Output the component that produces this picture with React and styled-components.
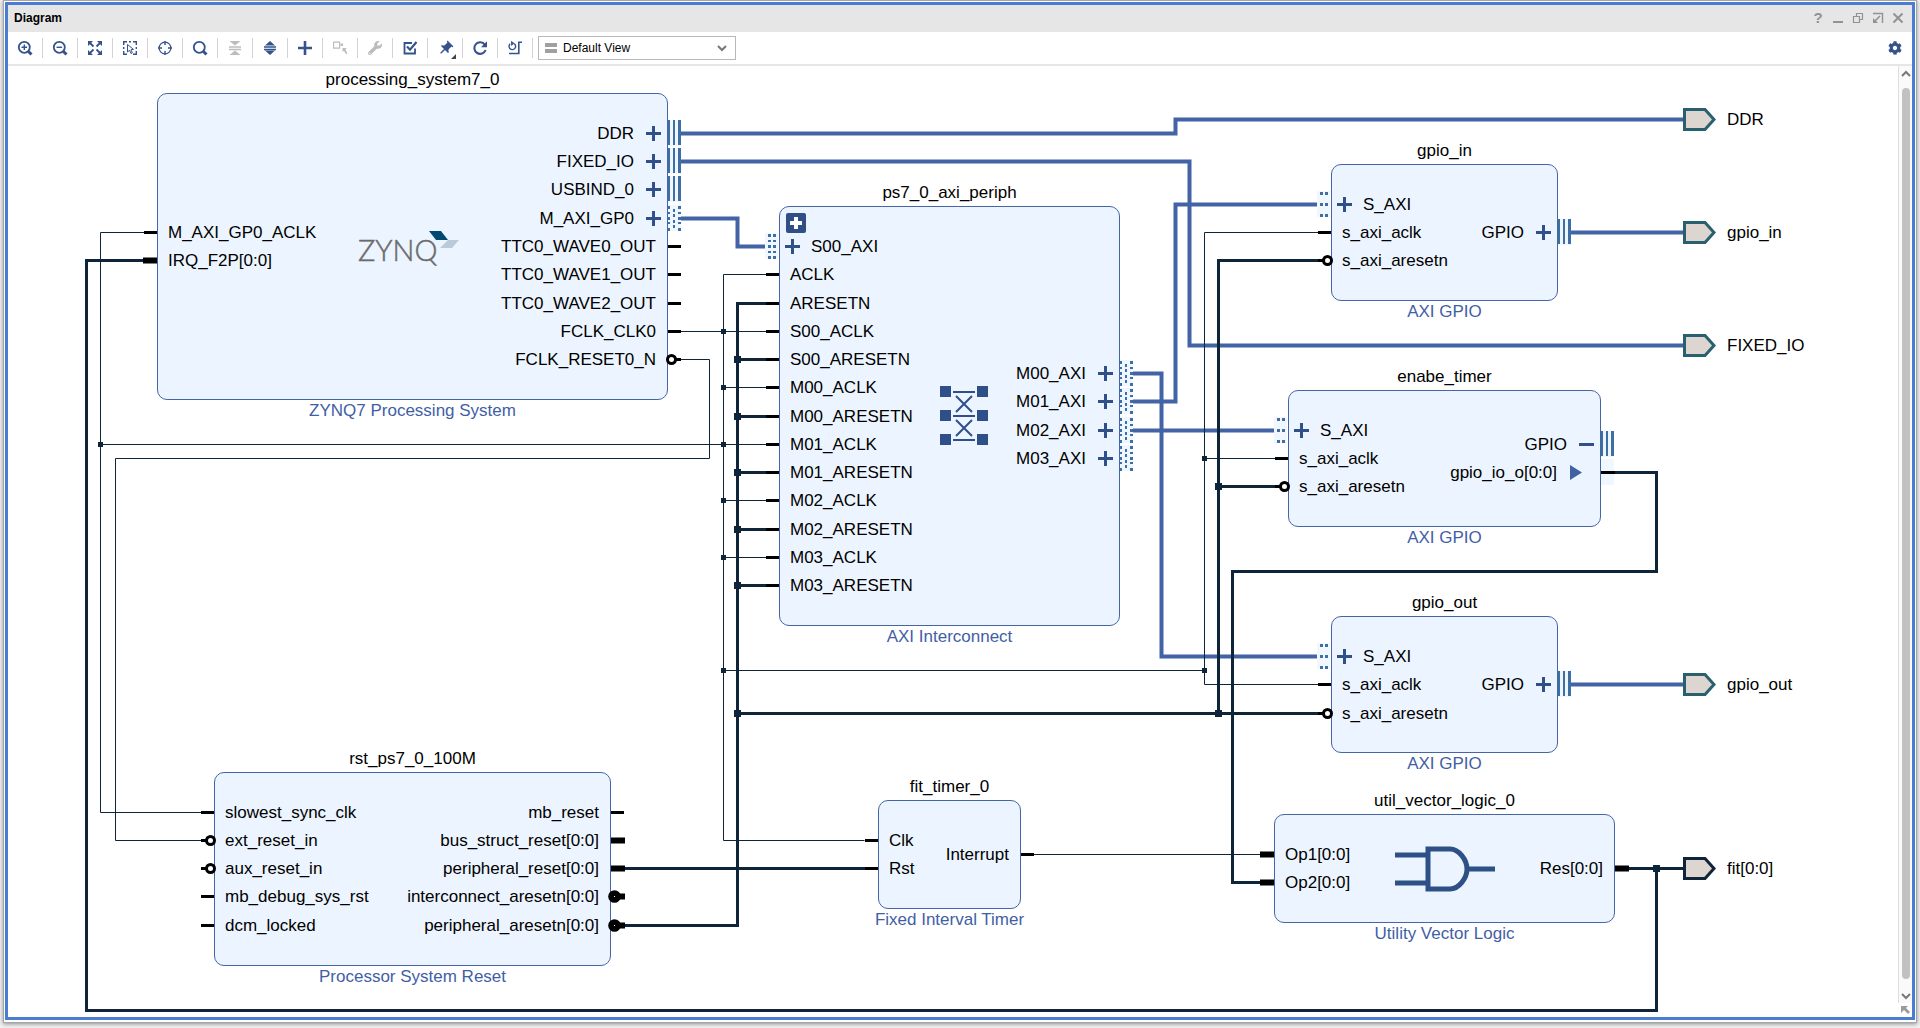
import React from "react";
import styled, { createGlobalStyle, css } from "styled-components";
import { FaWrench, FaCog } from "react-icons/fa";
import { MdPushPin } from "react-icons/md";

//*********************************************************
// Grid
//*********************************************************
const GRID_TOP = 67.29;
const GRID_PITCH = 28.285;
const HALF_ROW = 14;
const BLOCK_PAD = 40;
const TITLE_SPACE = 23;

// Every pin sits on a row (or half row) of the sheet
const rowY = row => Math.floor(GRID_TOP + GRID_PITCH * row);

//*********************************************************
// Data
//*********************************************************
const blocks = [
	{
		name: "processing_system7_0",
		type: "ZYNQ7 Processing System",
		x: 149,
		width: 511,
		top: 0,
		bottom: 8,
		icon: "zynq",
		left: { first: 3.5, ports: [
			{ label: "M_AXI_GP0_ACLK", pin: "stub" },
			{ label: "IRQ_F2P[0:0]", pin: "wide" }
		] },
		right: { first: 0, ports: [
			{ label: "DDR", pin: "bus", sign: "plus" },
			{ label: "FIXED_IO", pin: "bus", sign: "plus" },
			{ label: "USBIND_0", pin: "bus", sign: "plus" },
			{ label: "M_AXI_GP0", pin: "master", sign: "plus" },
			{ label: "TTC0_WAVE0_OUT", pin: "stub" },
			{ label: "TTC0_WAVE1_OUT", pin: "stub" },
			{ label: "TTC0_WAVE2_OUT", pin: "stub" },
			{ label: "FCLK_CLK0", pin: "stub" },
			{ label: "FCLK_RESET0_N", pin: "inverted" }
		] }
	},
	{
		name: "ps7_0_axi_periph",
		type: "AXI Interconnect",
		x: 771,
		width: 341,
		top: 4,
		bottom: 16,
		icon: "interconnect",
		expandable: true,
		left: { first: 4, ports: [
			{ label: "S00_AXI", pin: "slave", sign: "plus" },
			{ label: "ACLK", pin: "stub" },
			{ label: "ARESETN", pin: "stub" },
			{ label: "S00_ACLK", pin: "stub" },
			{ label: "S00_ARESETN", pin: "stub" },
			{ label: "M00_ACLK", pin: "stub" },
			{ label: "M00_ARESETN", pin: "stub" },
			{ label: "M01_ACLK", pin: "stub" },
			{ label: "M01_ARESETN", pin: "stub" },
			{ label: "M02_ACLK", pin: "stub" },
			{ label: "M02_ARESETN", pin: "stub" },
			{ label: "M03_ACLK", pin: "stub" },
			{ label: "M03_ARESETN", pin: "stub" }
		] },
		right: { first: 8.5, ports: [
			{ label: "M00_AXI", pin: "master", sign: "plus" },
			{ label: "M01_AXI", pin: "master", sign: "plus" },
			{ label: "M02_AXI", pin: "master", sign: "plus" },
			{ label: "M03_AXI", pin: "master", sign: "plus" }
		] }
	},
	{
		name: "gpio_in",
		type: "AXI GPIO",
		x: 1323,
		width: 227,
		top: 2.5,
		bottom: 4.5,
		left: { first: 2.5, ports: [
			{ label: "S_AXI", pin: "lite", sign: "plus" },
			{ label: "s_axi_aclk", pin: "stub" },
			{ label: "s_axi_aresetn", pin: "inverted" }
		] },
		right: { first: 3.5, ports: [
			{ label: "GPIO", pin: "bus", sign: "plus" }
		] }
	},
	{
		name: "enabe_timer",
		type: "AXI GPIO",
		x: 1280,
		width: 313,
		top: 10.5,
		bottom: 12.5,
		left: { first: 10.5, ports: [
			{ label: "S_AXI", pin: "lite", sign: "plus" },
			{ label: "s_axi_aclk", pin: "stub" },
			{ label: "s_axi_aresetn", pin: "inverted" }
		] },
		right: { first: 11, ports: [
			{ label: "GPIO", pin: "bus", sign: "minus" },
			{ label: "gpio_io_o[0:0]", pin: "member", sign: "arrow" }
		] }
	},
	{
		name: "gpio_out",
		type: "AXI GPIO",
		x: 1323,
		width: 227,
		top: 18.5,
		bottom: 20.5,
		left: { first: 18.5, ports: [
			{ label: "S_AXI", pin: "lite", sign: "plus" },
			{ label: "s_axi_aclk", pin: "stub" },
			{ label: "s_axi_aresetn", pin: "inverted" }
		] },
		right: { first: 19.5, ports: [
			{ label: "GPIO", pin: "bus", sign: "plus" }
		] }
	},
	{
		name: "rst_ps7_0_100M",
		type: "Processor System Reset",
		x: 206,
		width: 397,
		top: 24,
		bottom: 28,
		left: { first: 24, ports: [
			{ label: "slowest_sync_clk", pin: "stub" },
			{ label: "ext_reset_in", pin: "inverted" },
			{ label: "aux_reset_in", pin: "inverted" },
			{ label: "mb_debug_sys_rst", pin: "stub" },
			{ label: "dcm_locked", pin: "stub" }
		] },
		right: { first: 24, ports: [
			{ label: "mb_reset", pin: "stub" },
			{ label: "bus_struct_reset[0:0]", pin: "wide" },
			{ label: "peripheral_reset[0:0]", pin: "wide" },
			{ label: "interconnect_aresetn[0:0]", pin: "wideInverted" },
			{ label: "peripheral_aresetn[0:0]", pin: "wideInverted" }
		] }
	},
	{
		name: "fit_timer_0",
		type: "Fixed Interval Timer",
		x: 870,
		width: 143,
		top: 25,
		bottom: 26,
		left: { first: 25, ports: [
			{ label: "Clk", pin: "stub" },
			{ label: "Rst", pin: "stub" }
		] },
		right: { first: 25.5, ports: [
			{ label: "Interrupt", pin: "stub" }
		] }
	},
	{
		name: "util_vector_logic_0",
		type: "Utility Vector Logic",
		x: 1266,
		width: 341,
		top: 25.5,
		bottom: 26.5,
		icon: "gate",
		left: { first: 25.5, ports: [
			{ label: "Op1[0:0]", pin: "wide" },
			{ label: "Op2[0:0]", pin: "wide" }
		] },
		right: { first: 26, ports: [
			{ label: "Res[0:0]", pin: "wide" }
		] }
	}
];

const externals = [
	{ label: "DDR", row: -0.5, color: "#28606f" },
	{ label: "gpio_in", row: 3.5, color: "#28606f" },
	{ label: "FIXED_IO", row: 7.5, color: "#28606f" },
	{ label: "gpio_out", row: 19.5, color: "#28606f" },
	{ label: "fit[0:0]", row: 26, color: "#0e2439" }
];

// Each wire is a list of [x, row] corners
const busWires = [
	[[672, 0], [1167, 0], [1167, -0.5], [1676, -0.5]],
	[[672, 1], [1181, 1], [1181, 7.5], [1676, 7.5]],
	[[672, 3], [729, 3], [729, 4], [758, 4]],
	[[1124, 8.5], [1153, 8.5], [1153, 18.5], [1309, 18.5]],
	[[1124, 9.5], [1167, 9.5], [1167, 2.5], [1309, 2.5]],
	[[1124, 10.5], [1266, 10.5]],
	[[1562, 3.5], [1676, 3.5]],
	[[1562, 19.5], [1676, 19.5]]
];

const thinWires = [
	[[672, 7], [758, 7]],
	[[758, 5], [715, 5], [715, 25], [856, 25]],
	[[715, 9], [758, 9]],
	[[92, 11], [758, 11]],
	[[715, 13], [758, 13]],
	[[715, 15], [758, 15]],
	[[136, 3.5], [92, 3.5], [92, 24], [193, 24]],
	[[715, 19], [1196, 19]],
	[[1310, 3.5], [1196, 3.5], [1196, 19.5], [1310, 19.5]],
	[[1196, 11.5], [1267, 11.5]],
	[[672, 8], [701, 8], [701, 11.5], [107, 11.5], [107, 25], [193, 25]],
	[[1025, 25.5], [1253, 25.5]]
];

const thickWires = [
	[[758, 6], [729, 6], [729, 28], [616, 28]],
	[[729, 8], [758, 8]],
	[[729, 10], [758, 10]],
	[[729, 12], [758, 12]],
	[[729, 14], [758, 14]],
	[[729, 16], [758, 16]],
	[[729, 20.5], [1310, 20.5]],
	[[1310, 4.5], [1210, 4.5], [1210, 20.5]],
	[[1210, 12.5], [1267, 12.5]],
	[[1606, 12], [1648, 12], [1648, 15.5], [1224, 15.5], [1224, 26.5], [1253, 26.5]],
	[[1619, 26], [1676, 26]],
	[[1648, 26], [1648, 31], [78, 31], [78, 4.5], [136, 4.5]],
	[[616, 26], [857, 26]]
];

const thinJoints = [
	[715, 7], [715, 9], [715, 11], [715, 13], [715, 15], [715, 19],
	[92, 11], [1196, 11.5], [1196, 19]
];

const thickJoints = [
	[729, 8], [729, 10], [729, 12], [729, 14], [729, 16], [729, 20.5],
	[1210, 12.5], [1210, 20.5], [1648, 26]
];

//*********************************************************
// Styles
//*********************************************************
const GlobalStyle = createGlobalStyle`
	* {
		box-sizing: border-box;
	}

	body {
		margin: 0;
		background: #f1f1f1;
		color: #000;
		font-family: "Liberation Sans", Arial, sans-serif;
		font-size: 12px;
	}
`;

const Page = styled.div`
	display: flex;
	height: 100vh;
	padding: 0 3px 5px;
	overflow: hidden;
`;

const Frame = styled.div`
	display: flex;
	flex: 1;
	min-width: 0;
	padding: 1px 1px 2px;
	border: 1px solid #a6a6a6;
	background: #fff;
	box-shadow: 0 1px 4px #8c8c8c;
`;

const Window = styled.main`
	display: flex;
	flex: 1;
	min-width: 0;
	flex-direction: column;
	border: 3px solid #4a7dd2;
	background: #fff;
`;

const TitleBar = styled.header`
	display: flex;
	align-items: center;
	justify-content: space-between;
	height: 27px;
	padding: 0 4px 2px 6px;
	background: #e6e6e6;
`;

const Title = styled.h1`
	margin: 0;
	font-size: 12px;
	line-height: 16px;
`;

const TitleButtons = styled.div`
	display: flex;
`;

const TitleButton = styled.button`
	display: flex;
	align-items: center;
	justify-content: center;
	width: 20px;
	height: 20px;
	padding: 0;
	border: 0;
	background: none;
	color: #929292;
	font: bold 15px "Liberation Sans", Arial, sans-serif;
`;

const Toolbar = styled.div`
	display: flex;
	align-items: center;
	height: 34px;
	border-bottom: 2px solid #e6e6e6;
`;

const ToolButton = styled.button`
	position: relative;
	display: flex;
	align-items: center;
	justify-content: center;
	width: 35px;
	height: 20px;
	padding: 0;
	border: 0;
	border-right: 1px solid #d3d3d3;
	background: none;
	color: #34528c;

	&:disabled {
		color: #bcbcbc;
	}
`;

const MenuMark = styled.span`
	position: absolute;
	right: 6px;
	bottom: -1px;
	border-bottom: 5px solid #444;
	border-left: 5px solid transparent;
`;

const ViewPicker = styled.label`
	display: flex;
	align-items: center;
	gap: 6px;
	width: 198px;
	height: 24px;
	margin-left: 5px;
	padding: 0 8px 0 6px;
	border: 1px solid #b9b9b9;
	background: #fff;
`;

const ViewSelect = styled.select`
	flex: 1;
	appearance: none;
	padding: 0;
	border: 0;
	background: none;
	color: #000;
	font: 12px "Liberation Sans", Arial, sans-serif;
`;

const SettingsButton = styled(ToolButton)`
	margin-left: auto;
	border-right: 0;
`;

const Body = styled.div`
	display: flex;
	flex: 1;
	min-height: 0;
`;

const Viewport = styled.div`
	flex: 1;
	min-width: 0;
	overflow: hidden;
`;

const ScrollColumn = styled.div`
	display: flex;
	flex-direction: column;
	width: 14px;
`;

const ScrollBar = styled.div`
	display: flex;
	flex: 1;
	flex-direction: column;
	align-items: center;
	border-left: 1px solid #dedede;
	background: #fafafa;
	color: #777;
`;

const ScrollArrow = styled.button`
	display: flex;
	align-items: center;
	justify-content: center;
	width: 13px;
	height: 14px;
	padding: 0;
	border: 0;
	background: none;
	color: inherit;
`;

const ScrollThumb = styled.div`
	flex: 1;
	width: 8px;
	margin: 8px 0 10px;
	border-radius: 4px;
	background: #c1c1c1;
`;

const Corner = styled.div`
	display: flex;
	justify-content: center;
	height: 14px;
`;

const Sheet = styled.div`
	position: relative;
	width: 1890px;
	font-size: 17px;
	line-height: 20px;
	white-space: nowrap;
`;

const WireLayer = styled.svg`
	display: block;
`;

const Node = styled.section`
	position: absolute;
	display: flex;
	flex-direction: column;
	align-items: center;
`;

const NodeName = styled.h2`
	height: 23px;
	margin: 0;
	font-size: inherit;
	font-weight: normal;
	line-height: 20px;
`;

const NodeType = styled.p`
	margin: 1px 0 0;
	color: #3f60a6;
`;

const NodeBox = styled.div`
	position: relative;
	display: flex;
	align-self: stretch;
	justify-content: space-between;
	border: 1px solid #4565a6;
	border-radius: 10px;
	background: #ecf5ff;
`;

const Ports = styled.ul`
	display: flex;
	flex-direction: column;
	margin: 0;
	padding: 0;
	list-style: none;
`;

const PortRow = styled.li`
	display: flex;
	align-items: flex-start;
	flex-direction: ${props => (props.$side === "right" ? "row-reverse" : "row")};
`;

const PinSlot = styled.svg`
	display: block;
	flex: none;
	overflow: visible;
	${props => (props.$side === "right"
		? css`margin-right: -15px;`
		: css`margin-left: -15px;`)}
`;

const Sign = styled.svg`
	display: block;
	flex: none;
	margin-left: ${props => (props.$side === "left" ? "6px" : "0")};
	margin-right: ${props => {
		if (props.$side === "left") return "0";
		return props.$kind === "arrow" ? "17px" : "7px";
	}};
`;

const PortLabel = styled.span`
	padding: ${props => (props.$side === "right" ? "0 12px 0 0" : "0 0 0 11px")};
	line-height: 29px;
`;

const Emblem = styled.div`
	display: grid;
	flex: none;
	align-self: center;
`;

const ExpandButton = styled.button`
	position: absolute;
	top: 6px;
	left: 6px;
	display: flex;
	align-items: center;
	justify-content: center;
	width: 20px;
	height: 20px;
	padding: 0;
	border: 0;
	border-radius: 2px;
	background: #304f87;
`;

const External = styled.div`
	position: absolute;
	left: 1675px;
	display: flex;
	align-items: center;
	gap: 11px;
	height: 29px;
`;

//*********************************************************
// Icons
//*********************************************************
const Icon = ({ children, size = 16 }) => (
	<svg
		width={size}
		height={size}
		viewBox={`0 0 ${size} ${size}`}
		fill="none"
		stroke="currentColor"
		strokeWidth="2"
		aria-hidden="true"
	>
		{children}
	</svg>
);

const Lens = ({ children }) => (
	<Icon>
		<circle cx="7.3" cy="7.3" r="5.5" strokeWidth="1.8"/>
		<path d="M11.2 11.2l3.3 3.3" strokeWidth="3"/>
		{children}
	</Icon>
);

const FitIcon = () => (
	<Icon>
		<path d="M6.5 6.5L3 3M9.5 6.5L13 3M6.5 9.5L3 13M9.5 9.5L13 13" strokeWidth="1.8"/>
		<path
			d="M1 1h5L1 6zM15 1v5l-5-5zM1 15v-5l5 5zM15 15h-5l5-5z"
			fill="currentColor"
			stroke="none"
		/>
	</Icon>
);

const SelectAreaIcon = () => (
	<Icon>
		<path d="M1.7 5V1.7H5M11 1.7h3.3V5M14.3 11v3.3H11M5 14.3H1.7V11M7 1.7h2M1.7 7v2M14.3 7v2" strokeWidth="1.4"/>
		<path d="M5.5 4.5v7.5l2-1.7 1.5 3.2 1.4-.7-1.5-3 2.6-.4z" strokeWidth="1"/>
	</Icon>
);

const TargetIcon = () => (
	<Icon>
		<circle cx="8" cy="8" r="5.9" strokeWidth="1.2"/>
		<path d="M8 1v4M8 11v4M1 8h4M11 8h4" strokeWidth="1.4"/>
	</Icon>
);

const CollapseIcon = () => (
	<Icon>
		<path d="M2.5 1h11L8 5.5zM2.5 15h11L8 10.5z" fill="currentColor" stroke="none"/>
		<path d="M2 7h12M2 9.5h12" strokeWidth="1.4"/>
	</Icon>
);

const ExpandIcon = () => (
	<Icon>
		<path d="M8 1l5 4.5H3zM8 15l5-4.5H3z" fill="currentColor" stroke="none"/>
		<path d="M2 7h12M2 9.5h12" strokeWidth="1.6"/>
	</Icon>
);

const AddIcon = () => (
	<Icon>
		<path d="M8 1v14M1 8h14" strokeWidth="2.6"/>
	</Icon>
);

const ConnectIcon = () => (
	<Icon>
		<path d="M1.6 2.1h6v6h-6z" strokeWidth="1.1"/>
		<path d="M8.5 3.5h2.5v2.5H8.5z" fill="currentColor" stroke="none"/>
		<path d="M10.5 8h4.2l-1.3 1.5 2 3.8-1.3 1-2.2-3.6-1.4 1.4z" fill="currentColor" stroke="none"/>
	</Icon>
);

const ValidateIcon = () => (
	<Icon>
		<path d="M13 8.5v5H2.5V3H10" strokeWidth="1.8"/>
		<path d="M5 6.5l3 3.2L14.5 2" strokeWidth="2.2"/>
	</Icon>
);

const RefreshIcon = () => (
	<Icon>
		<path d="M12.8 4.6A5.8 5.8 0 1 0 13.6 10" strokeWidth="2.1"/>
		<path d="M15 1.2v6H9z" fill="currentColor" stroke="none"/>
	</Icon>
);

const RouteIcon = () => (
	<Icon>
		<path d="M3.2 3.8A3.3 3.3 0 1 0 7.2 3.6" strokeWidth="1.4"/>
		<path d="M4 .8l3.4 2.4L4.2 6z" fill="currentColor" stroke="none"/>
		<path d="M15 2.2h-3.2v11.3H2" strokeWidth="1.6"/>
	</Icon>
);

const ZynqLogo = () => (
	<svg width="102" height="36" viewBox="0 0 102 36" overflow="visible" role="img" aria-label="ZYNQ">
		<text
			x="0"
			y="32"
			fill="#6b6c6e"
			stroke="#6b6c6e"
			strokeWidth="0.5"
			fontFamily="Lato, sans-serif"
			fontWeight="300"
			fontSize="29"
		>
			ZYNQ
		</text>
		<path d="M71 2h12l7 9H78z" fill="#004a70"/>
		<path d="M90 11h11l-7 8H82z" fill="#b9cad8"/>
	</svg>
);

const InterconnectLogo = () => (
	<svg width="48" height="60" viewBox="0 0 48 60" fill="#2e4f87" stroke="#2e4f87" aria-hidden="true">
		<g stroke="none">
			<path d="M0 0h11v11H0zM37 0h11v11H37zM0 24h11v11H0zM37 24h11v11H37zM0 48h11v11H0zM37 48h11v11H37z"/>
			<path d="M13 5h22v2H13zM13 29h22v2H13zM13 53h22v2H13z"/>
		</g>
		<path d="M16 10l16 16M32 10L16 26M16 34l16 16M32 34L16 50" strokeWidth="2"/>
	</svg>
);

const GateLogo = () => (
	<svg width="100" height="46" viewBox="0 0 100 46" fill="none" stroke="#2d5086" strokeWidth="5" aria-hidden="true">
		<path d="M0 9h31M0 37h31M72 23h28"/>
		<path d="M33 3h22c9 0 17 11 17 20s-8 20-17 20H33z"/>
	</svg>
);

const emblems = {
	zynq: ZynqLogo,
	interconnect: InterconnectLogo,
	gate: GateLogo
};

const signs = {
	plus: <path d="M0 13h15v3H0zM6 7h3v15H6z" fill="#30508a"/>,
	minus: <path d="M0 13h15v3H0z" fill="#30508a"/>,
	arrow: <path d="M1 7l12 7.5L1 22z" fill="#4062a4"/>
};

// Pins are drawn as they hang off the right edge of a block
const pinShapes = {
	stub: <rect y="13" width="13" height="3"/>,
	wide: <rect y="11.5" width="14" height="6"/>,
	inverted: (
		<g>
			<circle cx="3.5" cy="14.5" r="4" fill="#fff" stroke="#000" strokeWidth="3"/>
			<rect x="8" y="13" width="5" height="3"/>
		</g>
	),
	wideInverted: (
		<g>
			<rect x="4" y="11.5" width="10" height="6"/>
			<circle cx="3.5" cy="14.5" r="6.3"/>
			<rect x="3" y="14" width="1" height="1" fill="#fff"/>
		</g>
	),
	member: (
		<g>
			<rect y="1" width="13" height="26" fill="#f0f7ff"/>
			<rect y="13" width="14" height="3"/>
		</g>
	),
	bus: (
		<g>
			<rect y="1" width="13" height="26" fill="#eef6ff"/>
			<path d="M0 1h2v25H0zM5 1h2v25H5zM10 1h3v25h-3z" fill="#3f6ea3"/>
		</g>
	),
	master: (
		<g fill="#3f6ea3">
			<rect y="1" width="13" height="26" fill="#eef6ff"/>
			<path d="M0 2h2v3H0zM0 8h2v2H0zM0 13h2v3H0zM0 18h2v2H0zM0 24h2v3H0z"/>
			<path d="M5 5h2v3H5zM5 10h2v3H5zM5 16h2v3H5zM5 21h2v3H5z"/>
			<path d="M10 2h3v3h-3zM10 8h3v2h-3zM10 13h3v3h-3zM10 18h3v2h-3zM10 24h3v3h-3z"/>
		</g>
	),
	slave: (
		<g fill="#3f6ea3">
			<rect x="1" y="1" width="13" height="26" fill="#f0f7ff"/>
			<path d="M3 2h3v3H3zM3 8h3v2H3zM3 13h3v3H3zM3 19h3v2H3zM3 24h3v3H3z"/>
			<path d="M8 2h3v3H8zM8 8h3v2H8zM8 13h3v3H8zM8 19h3v2H8zM8 24h3v3H8z"/>
		</g>
	),
	lite: (
		<g fill="#3f6ea3">
			<rect x="1" y="1" width="13" height="26" fill="#f0f7ff"/>
			<path d="M3 2h3v3H3zM3 13h3v3H3zM3 24h3v3H3z"/>
			<path d="M8 2h3v3H8zM8 13h3v3H8zM8 24h3v3H8z"/>
		</g>
	)
};

//*********************************************************
// Diagram
//*********************************************************
const Port = ({ port, side, row }) => (
	<PortRow $side={side} style={{ height: rowY(row + 1) - rowY(row) }}>
		<PinSlot $side={side} width="14" height="28" aria-hidden="true">
			<g transform={side === "left" ? "translate(14 0) scale(-1 1)" : undefined}>
				{pinShapes[port.pin]}
			</g>
		</PinSlot>
		{port.sign && (
			<Sign $side={side} $kind={port.sign} width="15" height="28" aria-hidden="true">
				{signs[port.sign]}
			</Sign>
		)}
		<PortLabel $side={side}>{port.label}</PortLabel>
	</PortRow>
);

const PortColumn = ({ side, top, column }) => (
	<Ports style={{ paddingTop: rowY(column.first) - rowY(top) + BLOCK_PAD - HALF_ROW - 1 }}>
		{column.ports.map((port, i) => (
			<Port key={port.label} port={port} side={side} row={column.first + i}/>
		))}
	</Ports>
);

const Block = ({ block }) => {
	const Logo = emblems[block.icon];
	const top = rowY(block.top) - BLOCK_PAD;
	const height = Math.floor((block.bottom - block.top) * GRID_PITCH) + 2 * BLOCK_PAD + 1;

	return (
		<Node style={{ left: block.x, top: top - TITLE_SPACE, width: block.width }}>
			<NodeName>{block.name}</NodeName>
			<NodeBox style={{ height }}>
				<PortColumn side="left" top={block.top} column={block.left}/>
				{Logo && <Emblem><Logo/></Emblem>}
				<PortColumn side="right" top={block.top} column={block.right}/>
				{block.expandable && (
					<ExpandButton aria-label="Expand hierarchy">
						<svg width="12" height="12" viewBox="0 0 12 12" fill="#fff">
							<path d="M0 4h12v4H0zM4 0h4v12H4z"/>
						</svg>
					</ExpandButton>
				)}
			</NodeBox>
			<NodeType>{block.type}</NodeType>
		</Node>
	);
};

const toPoints = wire => wire.map(([x, row]) => `${x},${rowY(row)}`).join(" ");

const Wires = ({ wires, color, width }) => (
	<g fill="none" stroke={color} strokeWidth={width}>
		{wires.map(wire => <polyline key={toPoints(wire)} points={toPoints(wire)}/>)}
	</g>
);

const Joints = ({ points, size }) => (
	<g fill="#0e2439">
		{points.map(([x, row]) => (
			<rect
				key={`${x}-${row}`}
				x={x - size / 2}
				y={rowY(row) - size / 2}
				width={size}
				height={size}
			/>
		))}
	</g>
);

const Diagram = () => (
	<Sheet>
		<WireLayer width="1890" height={rowY(31) + 4} aria-hidden="true">
			<g transform="translate(0.5 0.5)">
				<Wires wires={busWires} color="#4263a5" width="4"/>
				<Wires wires={thinWires} color="#0e2439" width="1"/>
				<Wires wires={thickWires} color="#0e2439" width="3"/>
				<Joints points={thinJoints} size={5}/>
				<Joints points={thickJoints} size={7}/>
			</g>
		</WireLayer>

		{blocks.map(block => <Block key={block.name} block={block}/>)}

		{externals.map(({ label, row, color }) => (
			<External key={label} style={{ top: rowY(row) - HALF_ROW }}>
				<svg width="33" height="23" viewBox="0 0 33 23" aria-hidden="true">
					<path
						d="M1.5 1.5h20.5l9 10-9 10H1.5z"
						fill="#ddd5d0"
						stroke={color}
						strokeWidth="3"
					/>
				</svg>
				<span>{label}</span>
			</External>
		))}
	</Sheet>
);

//*********************************************************
// Component
//*********************************************************
const App = () => (
	<>
		<GlobalStyle/>
		<Page>
			<Frame>
				<Window>
					<TitleBar>
						<Title>Diagram</Title>
						<TitleButtons>
							<TitleButton aria-label="Help">?</TitleButton>
							<TitleButton aria-label="Minimize">
								<Icon size={12}><path d="M1 10h10"/></Icon>
							</TitleButton>
							<TitleButton aria-label="Restore">
								<Icon size={12}>
									<path d="M1.5 4.5h6v6h-6zM4.5 4V1.5h6v6H8" strokeWidth="1.2"/>
								</Icon>
							</TitleButton>
							<TitleButton aria-label="Float">
								<Icon size={12}>
									<path d="M1 1.5h9.5V11" strokeWidth="1.4"/>
									<path d="M8 4L3 9" strokeWidth="1.6"/>
									<path d="M1 6v5h5z" fill="currentColor" stroke="none"/>
								</Icon>
							</TitleButton>
							<TitleButton aria-label="Close">
								<Icon size={12}><path d="M1.5 1.5l9 9M10.5 1.5l-9 9"/></Icon>
							</TitleButton>
						</TitleButtons>
					</TitleBar>

					<Toolbar>
						<ToolButton aria-label="Zoom in">
							<Lens><path d="M7.3 4.5v5.6M4.5 7.3h5.6" strokeWidth="1.4"/></Lens>
						</ToolButton>
						<ToolButton aria-label="Zoom out">
							<Lens><path d="M4.5 7.3h5.6" strokeWidth="1.4"/></Lens>
						</ToolButton>
						<ToolButton aria-label="Zoom fit"><FitIcon/></ToolButton>
						<ToolButton aria-label="Select area"><SelectAreaIcon/></ToolButton>
						<ToolButton aria-label="Auto-fit selection"><TargetIcon/></ToolButton>
						<ToolButton aria-label="Search"><Lens/></ToolButton>
						<ToolButton aria-label="Collapse all" disabled><CollapseIcon/></ToolButton>
						<ToolButton aria-label="Expand all"><ExpandIcon/></ToolButton>
						<ToolButton aria-label="Add IP"><AddIcon/></ToolButton>
						<ToolButton aria-label="Make connection" disabled><ConnectIcon/></ToolButton>
						<ToolButton aria-label="Customize block" disabled><FaWrench size={14}/></ToolButton>
						<ToolButton aria-label="Validate design"><ValidateIcon/></ToolButton>
						<ToolButton aria-label="Pin">
							<MdPushPin size={17} transform="rotate(45)"/>
							<MenuMark/>
						</ToolButton>
						<ToolButton aria-label="Regenerate layout"><RefreshIcon/></ToolButton>
						<ToolButton aria-label="Optimize routing"><RouteIcon/></ToolButton>

						<ViewPicker>
							<svg width="12" height="10" viewBox="0 0 12 10" fill="#a0a0a0" aria-hidden="true">
								<path d="M0 0h12v4H0zM0 6h12v4H0z"/>
							</svg>
							<ViewSelect aria-label="View" defaultValue="default">
								<option value="default">Default View</option>
							</ViewSelect>
							<svg width="10" height="7" viewBox="0 0 10 7" fill="none" stroke="#777" strokeWidth="2" aria-hidden="true">
								<path d="M1 1l4 4 4-4"/>
							</svg>
						</ViewPicker>

						<SettingsButton aria-label="Settings"><FaCog size={14}/></SettingsButton>
					</Toolbar>

					<Body>
						<Viewport>
							<Diagram/>
						</Viewport>
						<ScrollColumn>
							<ScrollBar>
								<ScrollArrow aria-label="Scroll up">
									<svg width="10" height="7" viewBox="0 0 10 7" fill="none" stroke="currentColor" strokeWidth="2">
										<path d="M1 6l4-4 4 4"/>
									</svg>
								</ScrollArrow>
								<ScrollThumb/>
								<ScrollArrow aria-label="Scroll down">
									<svg width="10" height="7" viewBox="0 0 10 7" fill="none" stroke="currentColor" strokeWidth="2">
										<path d="M1 1l4 4 4-4"/>
									</svg>
								</ScrollArrow>
							</ScrollBar>
							<Corner>
								<svg width="10" height="12" viewBox="0 0 10 12" aria-hidden="true">
									<path d="M1 3h7L6 5l4 4-2 2-4-4-3 3z" fill="#9b9b9b"/>
								</svg>
							</Corner>
						</ScrollColumn>
					</Body>
				</Window>
			</Frame>
		</Page>
	</>
);

export default App;
